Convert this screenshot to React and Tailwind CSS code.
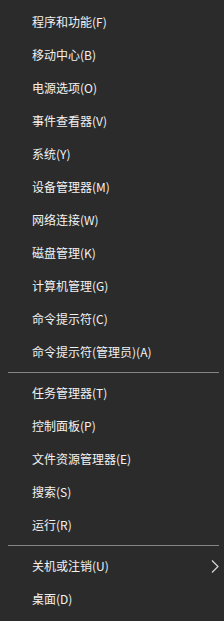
const GROUPS = [
  [
    '程序和功能(F)',
    '移动中心(B)',
    '电源选项(O)',
    '事件查看器(V)',
    '系统(Y)',
    '设备管理器(M)',
    '网络连接(W)',
    '磁盘管理(K)',
    '计算机管理(G)',
    '命令提示符(C)',
    '命令提示符(管理员)(A)',
  ],
  ['任务管理器(T)', '控制面板(P)', '文件资源管理器(E)', '搜索(S)', '运行(R)'],
  ['关机或注销(U)', '桌面(D)'],
]

function Row({ label, sub }) {
  return (
    <div className="h-[33px] flex items-center pl-8 pr-[5px] text-[12px] text-[#f2f2f2] leading-none">
      <span className="flex-1">{label}</span>
      {sub && (
        <svg width="8" height="13" viewBox="0 0 8 13">
          <path d="M1 0.5l6 6-6 6" fill="none" stroke="#d8d8d8" strokeWidth="1.2" />
        </svg>
      )}
    </div>
  )
}

export default function App() {
  return (
    <div
      className="w-[224px] h-[621px] bg-[#2b2b2b] py-[5.5px] overflow-hidden"
      style={{ fontFamily: '"Noto Sans CJK SC", "Liberation Sans", sans-serif' }}
    >
      {GROUPS.map((group, gi) => (
        <div key={gi}>
          {gi > 0 && (
            <div className="h-2 flex items-center pl-2 pr-[5px]">
              <div className="h-px w-full bg-[#858585]" />
            </div>
          )}
          {group.map((label) => (
            <Row key={label} label={label} sub={label.startsWith('关机')} />
          ))}
        </div>
      ))}
    </div>
  )
}
